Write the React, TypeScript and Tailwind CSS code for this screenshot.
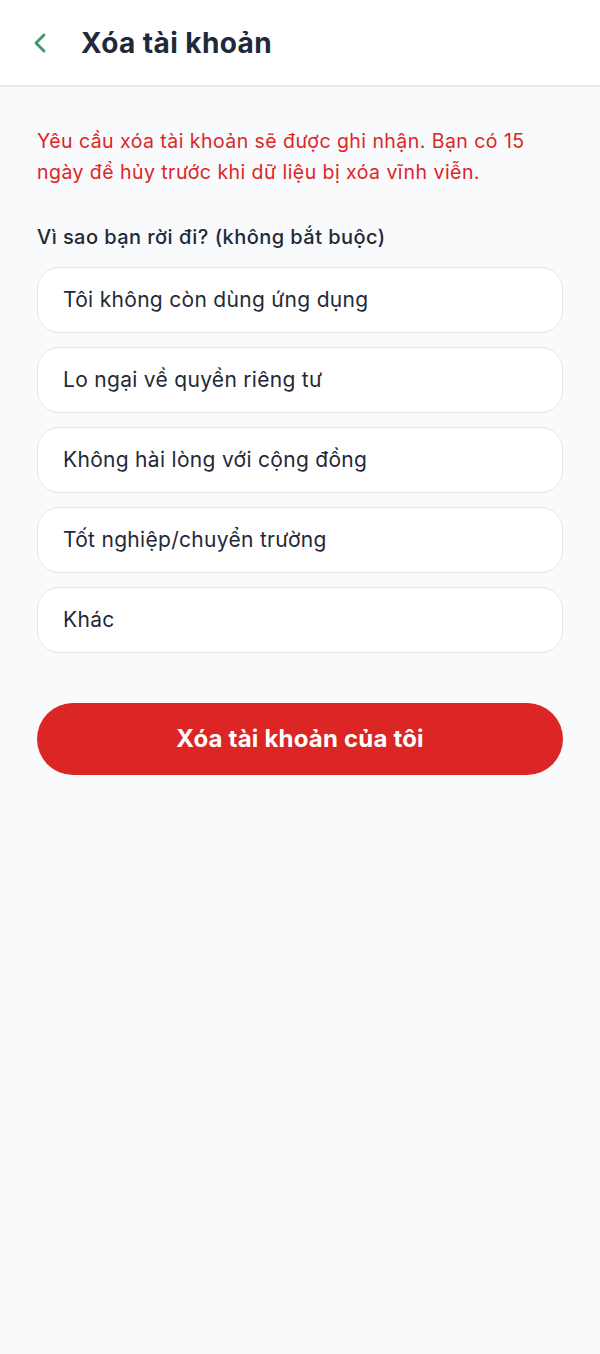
import { ChevronLeft } from 'lucide-react'

const REASONS = [
  'Tôi không còn dùng ứng dụng',
  'Lo ngại về quyền riêng tư',
  'Không hài lòng với cộng đồng',
  'Tốt nghiệp/chuyển trường',
  'Khác',
]

export default function App() {
  return (
    <div className="min-h-[1354px] bg-[#f8fafc] font-['Inter','Noto_Sans',sans-serif]">
      <header className="flex h-[87px] items-center border-b-2 border-[#e8eaed] bg-white px-[24px]">
        <button className="flex h-[32px] w-[32px] items-center justify-center text-[#3d9a6b]">
          <ChevronLeft size={34} strokeWidth={2.2} />
        </button>
        <h1 className="ml-[25px] text-[28px] font-bold tracking-[0.4px] text-[#1e2a3b]">Xóa tài khoản</h1>
      </header>

      <main className="px-[37px] pt-[39px]">
        <p className="text-[19.5px] leading-[31px] tracking-[0.45px] text-[#dc2626]">
          Yêu cầu xóa tài khoản sẽ được ghi nhận. Bạn có 15 ngày để hủy trước khi dữ liệu bị xóa vĩnh viễn.
        </p>

        <p className="mt-[34px] text-[20px] font-medium leading-[30px] tracking-[0.45px] text-[#1f2937]">
          Vì sao bạn rời đi? (không bắt buộc)
        </p>

        <div className="mt-[15px] flex flex-col gap-[14px]">
          {REASONS.map((r) => (
            <button
              key={r}
              className="flex h-[66px] items-center rounded-[22px] border border-[#e5e7eb] bg-white px-[25px] text-left text-[21px] tracking-[0.3px] text-[#1f2937]"
            >
              {r}
            </button>
          ))}
        </div>

        <button className="mt-[50px] flex h-[72px] w-full items-center justify-center rounded-full bg-[#dc2626] text-[24px] font-bold tracking-[0.2px] text-white">
          Xóa tài khoản của tôi
        </button>
      </main>
    </div>
  )
}
